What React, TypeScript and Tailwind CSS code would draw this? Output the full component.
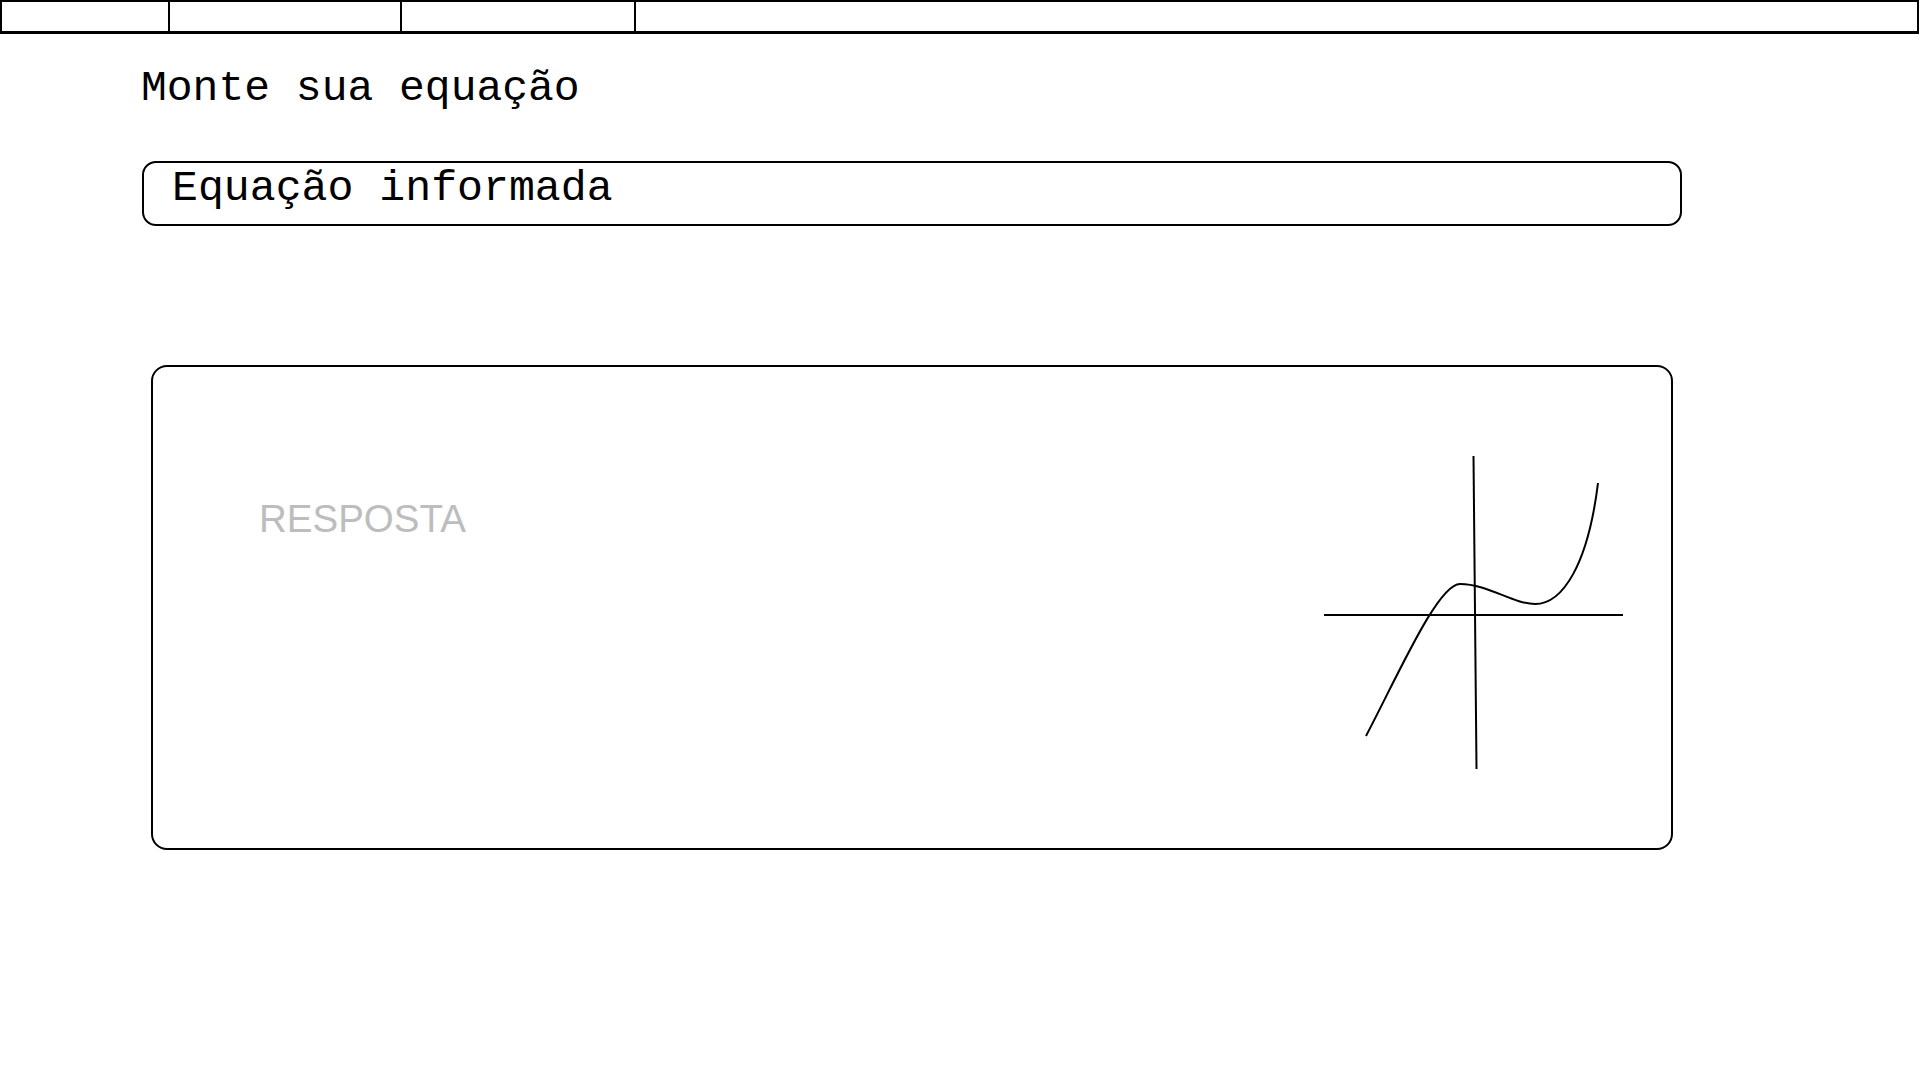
const tabs = [168, 232, 234];

function Graph() {
  return (
    <svg
      width={312}
      height={326}
      viewBox="1320 450 312 326"
      fill="none"
      stroke="#000"
      strokeWidth={2}
      className="mt-[83px] mr-[39px] shrink-0"
    >
      <line x1={1324} y1={615} x2={1623} y2={615} />
      <line x1={1473.5} y1={456} x2={1476.5} y2={769} />
      <path d="M1366 736 C1399 673 1438 584 1460 584 C1488 584 1513 604 1535 604 C1563 604 1588 564 1598 483" />
    </svg>
  );
}

export default function App() {
  return (
    <div className="min-h-screen w-[1920px] bg-white text-black">
      <div className="flex h-[34px] w-[1919px] border-t-2 border-b-[3px] border-l-2 border-r-2 border-black">
        {tabs.map((w, i) => (
          <div key={i} style={{ width: w }} className="h-full shrink-0 border-r-2 border-black" />
        ))}
        <div className="flex-1" />
      </div>

      <div className="pl-[141px]">
        <h1 className="mt-[33px] h-[43px] font-['Liberation_Mono',monospace] text-[43px] leading-none font-normal">
          Monte sua equação
        </h1>

        <div className="mt-[51px] ml-px h-[65px] w-[1540px] rounded-[14px] border-2 border-black pt-[4px] pl-[28px]">
          <span className="font-['Liberation_Mono',monospace] text-[43.2px] leading-none">
            Equação informada
          </span>
        </div>

        <div className="mt-[139px] ml-[10px] flex h-[485px] w-[1522px] items-start justify-between rounded-[16px] border-2 border-black">
          <p className="mt-[133px] ml-[106px] font-['Liberation_Sans',Arial,sans-serif] text-[38.5px] leading-none text-[#bdbdbd]">
            RESPOSTA
          </p>
          <Graph />
        </div>
      </div>
    </div>
  );
}
